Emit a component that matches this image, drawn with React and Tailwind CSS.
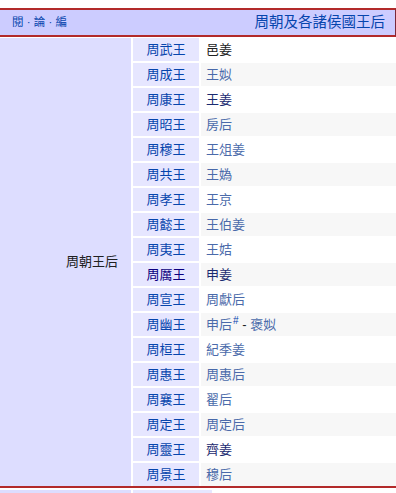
const rows = [
  { king: "周武王", queen: [{ t: "邑姜", c: "text-[#202122]" }] },
  { king: "周成王", queen: [{ t: "王姒", c: "text-[#4a6aaa]" }] },
  { king: "周康王", queen: [{ t: "王姜", c: "text-[#1a2a70]" }] },
  { king: "周昭王", queen: [{ t: "房后", c: "text-[#4a6aaa]" }] },
  { king: "周穆王", queen: [{ t: "王俎姜", c: "text-[#4a6aaa]" }] },
  { king: "周共王", queen: [{ t: "王媯", c: "text-[#4a6aaa]" }] },
  { king: "周孝王", queen: [{ t: "王京", c: "text-[#4a6aaa]" }] },
  { king: "周懿王", queen: [{ t: "王伯姜", c: "text-[#4a6aaa]" }] },
  { king: "周夷王", queen: [{ t: "王姞", c: "text-[#4a6aaa]" }] },
  { king: "周厲王", visited: true, queen: [{ t: "申姜", c: "text-[#1a2a70]" }] },
  { king: "周宣王", queen: [{ t: "周獻后", c: "text-[#4a6aaa]" }] },
  { king: "周幽王", queen: [{ t: "申后", c: "text-[#4a6aaa]", sup: "#" }, { t: " - ", c: "text-[#202122]" }, { t: "褒姒", c: "text-[#4a6aaa]" }] },
  { king: "周桓王", queen: [{ t: "紀季姜", c: "text-[#4a6aaa]" }] },
  { king: "周惠王", queen: [{ t: "周惠后", c: "text-[#4a6aaa]" }] },
  { king: "周襄王", queen: [{ t: "翟后", c: "text-[#4a6aaa]" }] },
  { king: "周定王", queen: [{ t: "周定后", c: "text-[#4a6aaa]" }] },
  { king: "周靈王", queen: [{ t: "齊姜", c: "text-[#1a2a70]" }] },
  { king: "周景王", queen: [{ t: "穆后", c: "text-[#4a6aaa]" }] },
];

const App = () => {
  return (
    <div
      className="w-[396px] h-[493px] overflow-hidden bg-white pt-2"
      style={{ fontFamily: '"Liberation Sans", "Noto Sans CJK TC", sans-serif' }}
    >
      {/* header */}
      <div className="h-[29px] border-y-2 border-[#b22a2a] border-r border-r-[#7a2a3a] bg-[#ccccff] flex items-center justify-between pl-[12px] pr-[10px]">
        <span className="text-[11.5px] text-[#0645ad] whitespace-pre">閱 · 論 · 編</span>
        <span className="text-[14.5px] text-[#0645ad]">周朝及各諸侯國王后</span>
      </div>

      {/* body */}
      <div className="flex gap-[2px] mt-[1px]">
        <div className="w-[131px] bg-[#ddddff] flex items-center justify-end pr-[13px] text-[13px] text-[#202122]">
          周朝王后
        </div>
        <div className="flex-1 flex flex-col gap-[2px]">
          {rows.map((r, i) => (
            <div key={r.king} className="flex gap-[2px] h-[23px]">
              <div
                className={`w-[66px] bg-[#e6e6ff] flex items-center justify-center text-[13px] ${r.visited ? "text-[#0b0080]" : "text-[#0645ad]"}`}
              >
                {r.king}
              </div>
              <div
                className={`flex-1 flex items-center pl-[5px] text-[13px] ${i % 2 === 0 ? "bg-white" : "bg-[#f7f7f7]"}`}
              >
                {r.queen.map((q, j) => (
                  <span key={j} className={`${q.c} whitespace-pre`}>
                    {q.t}
                    {q.sup && <sup className="text-[10px] text-[#0645ad] ml-[1px]">{q.sup}</sup>}
                  </span>
                ))}
              </div>
            </div>
          ))}
        </div>
      </div>

      {/* next navbox (cut off) */}
      <div className="border-t-2 border-[#b22a2a] pt-[2px] flex gap-[2px] h-[12px]">
        <div className="w-[131px] bg-[#ddddff]" />
        <div className="w-[79px] bg-[#e6e6ff]" />
        <div className="flex-1 bg-white" />
      </div>
    </div>
  );
};

export default App;
